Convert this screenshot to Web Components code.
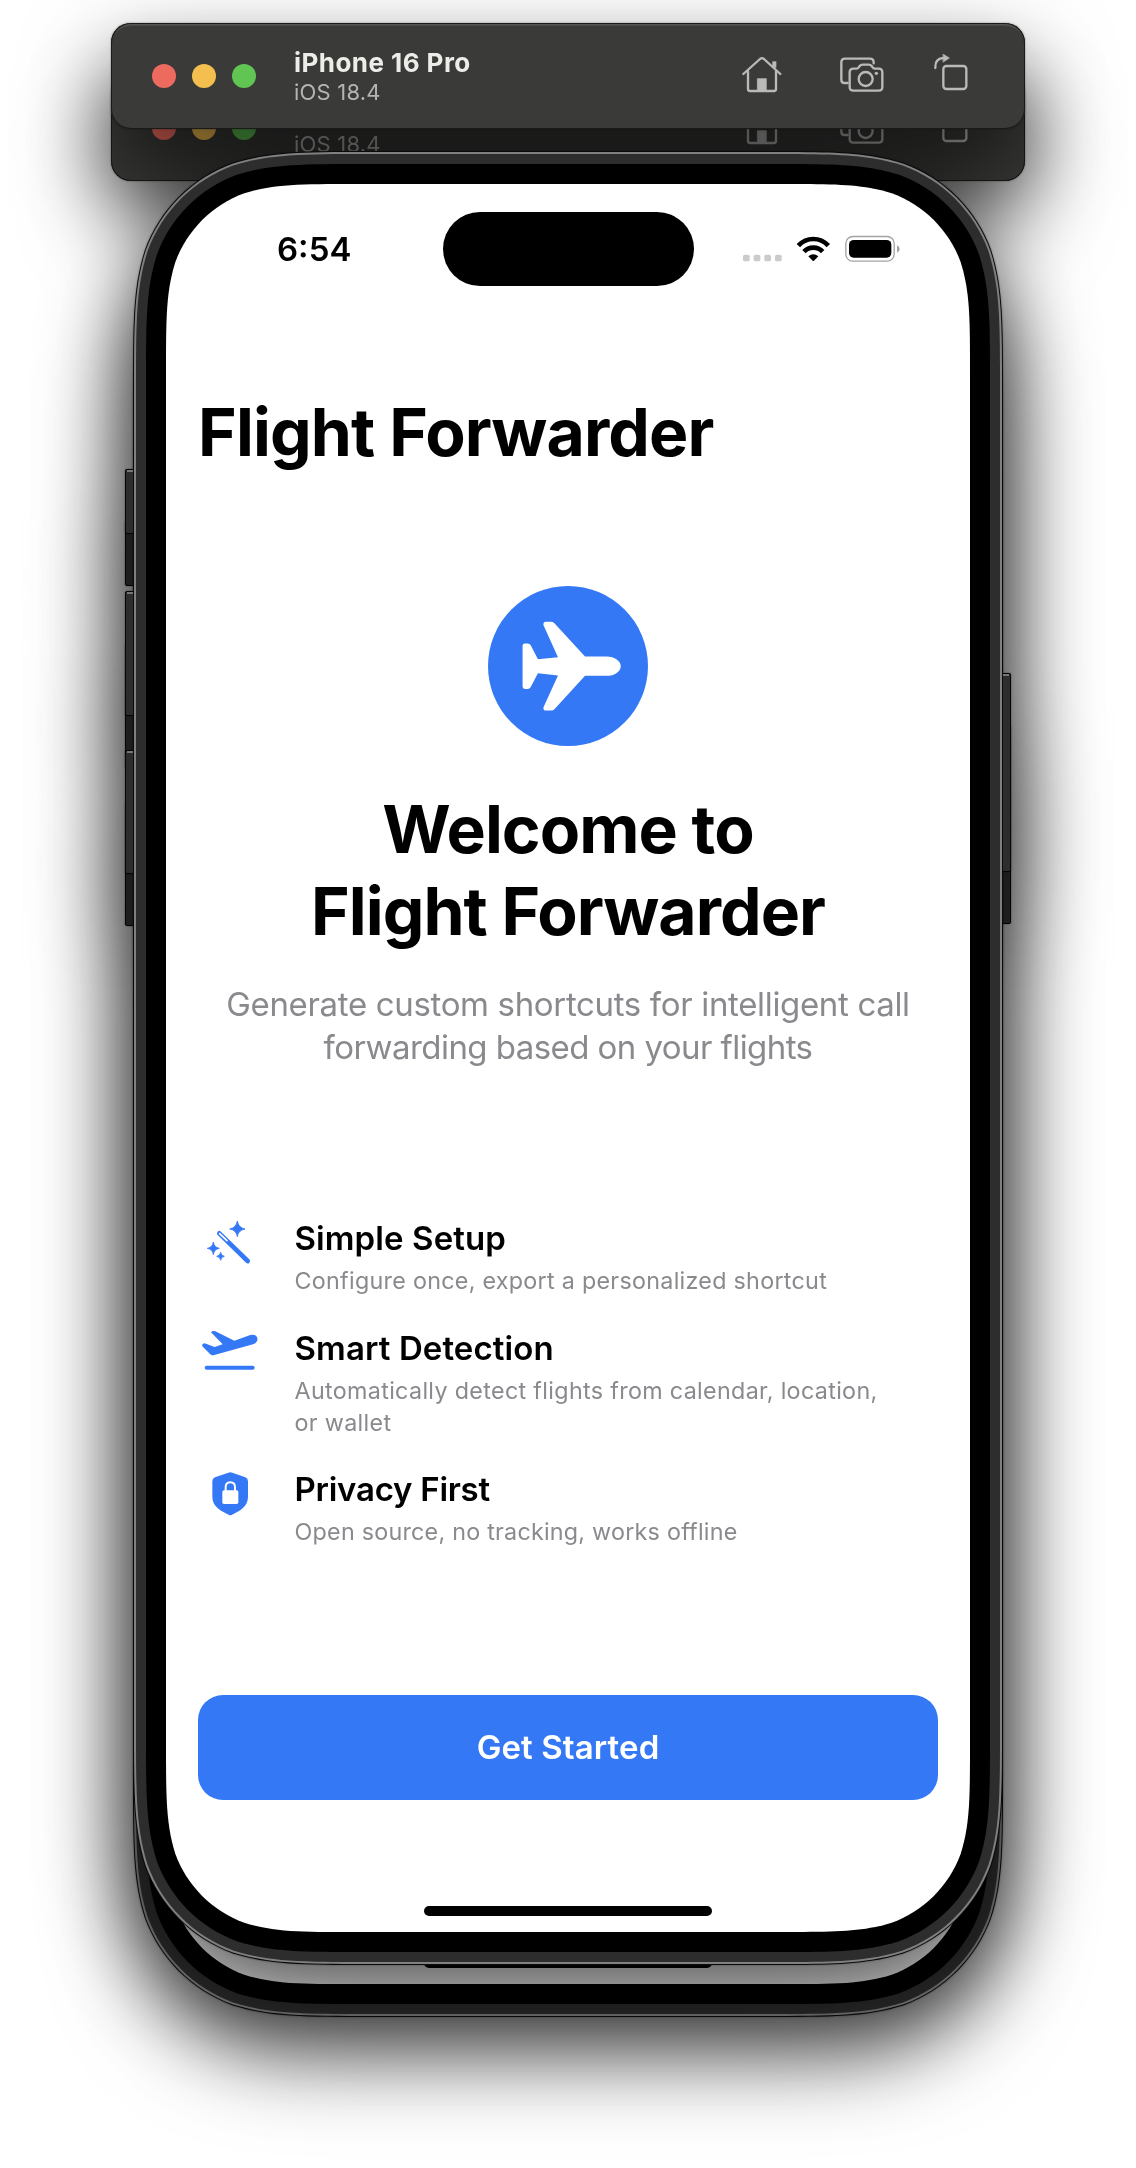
<!DOCTYPE html>
<html lang="en">
<head>
<meta charset="utf-8">
<title>iPhone 16 Pro</title>
<style>
  html, body { margin: 0; background: #fff; }
  body { width: 1136px; height: 2168px; overflow: hidden; font-family: Inter, "Liberation Sans", sans-serif; }
</style>
</head>
<body>
<sim-desktop>
  <sim-window class="back">
    <sim-toolbar slot="bar" subtitle="iOS 18.4"></sim-toolbar>
    <home-indicator></home-indicator>
  </sim-window>
  <sim-window class="front">
    <sim-toolbar slot="bar" heading="iPhone 16 Pro" subtitle="iOS 18.4"></sim-toolbar>
    <status-bar time="6:54"></status-bar>
    <welcome-page></welcome-page>
    <home-indicator></home-indicator>
  </sim-window>
</sim-desktop>

<script>
const define = (name, html) => customElements.define(name, class extends HTMLElement {
  constructor() {
    super();
    this.attachShadow({ mode: 'open' });
  }
  connectedCallback() {
    this.shadowRoot.innerHTML = typeof html === 'function' ? html(this) : html;
  }
});

/* Continuous-curvature rounded rectangle. */
function squircle(x, y, w, h, r) {
  const a = 1.528665 * r, b = 1.08849296 * r, c = 0.86840694 * r,
        d = 0.63149379 * r, e = 0.07491139 * r, f = 0.37282383 * r, g = 0.16905956 * r;
  const X = x + w, Y = y + h;
  return `M${x + a} ${y}H${X - a}` +
    `C${X - b} ${y} ${X - c} ${y} ${X - d} ${y + e}C${X - f} ${y + g} ${X - g} ${y + f} ${X - e} ${y + d}C${X} ${y + c} ${X} ${y + b} ${X} ${y + a}` +
    `V${Y - a}C${X} ${Y - b} ${X} ${Y - c} ${X - e} ${Y - d}C${X - g} ${Y - f} ${X - f} ${Y - g} ${X - d} ${Y - e}C${X - c} ${Y} ${X - b} ${Y} ${X - a} ${Y}` +
    `H${x + a}C${x + b} ${Y} ${x + c} ${Y} ${x + d} ${Y - e}C${x + f} ${Y - g} ${x + g} ${Y - f} ${x + e} ${Y - d}C${x} ${Y - c} ${x} ${Y - b} ${x} ${Y - a}` +
    `V${y + a}C${x} ${y + b} ${x} ${y + c} ${x + e} ${y + d}C${x + g} ${y + f} ${x + f} ${y + g} ${x + d} ${y + e}C${x + c} ${y} ${x + b} ${y} ${x + a} ${y}Z`;
}

define('sim-desktop', `
  <style>
    :host { display: grid; grid-template: 2168px / 1136px; justify-items: center; align-items: start; overflow: hidden; }
    ::slotted(*) { grid-area: 1 / 1; }
    ::slotted(.front) { margin-top: 23px; }
    ::slotted(.back) { margin-top: 75px; }
  </style><slot></slot>`);

define('sim-window', `
  <style>
    :host { display: flex; flex-direction: column; align-items: center; gap: 22px; width: 914px;
      filter: drop-shadow(0 0 1px rgba(0,0,0,.35)) drop-shadow(0 38px 43px rgba(0,0,0,.65)); }
    .device { display: grid; grid-template: 1815px / 896px; }
    .device > * { grid-area: 1 / 1; }
    svg { display: block; }
    .screen { margin: 33px 46px 34px; display: flex; flex-direction: column; }
  </style>
  <slot name="bar"></slot>
  <div class="device">
    <svg width="896" height="1815" viewBox="120 151 896 1815">
      ${[[469, 65], [591, 125], [750, 124]].map(([y, h]) => `
        <rect x="125" y="${y}" width="12" height="${h}" rx="2" fill="#050505"/>
        <rect x="126" y="${y + 1}" width="10" height="${h - 2}" rx="1.5" fill="#2d2d2d"/>
        <rect x="127" y="${y + 1}" width="9" height="2" fill="#767676"/>`).join('')}
      <rect x="999" y="673" width="12" height="199" rx="2" fill="#050505"/>
      <rect x="1000" y="674" width="10" height="197" rx="1.5" fill="#2d2d2d"/>
      <rect x="1000" y="674" width="9" height="2" fill="#767676"/>
      <path d="${squircle(133, 151, 870, 1814, 157)}" fill="#0a0a0a"/>
      <path d="${squircle(134, 152, 868, 1812, 156)}" fill="#808080"/>
      <path d="${squircle(136, 154, 864, 1808, 154)}" fill="#2d2d2d"/>
      <path d="${squircle(146, 164, 844, 1788, 144)}" fill="#000"/>
      <path d="${squircle(166, 184, 804, 1748, 124)}" fill="#fff"/>
    </svg>
    <div class="screen"><slot></slot></div>
  </div>`);

define('sim-toolbar', el => `
  <style>
    :host { display: flex; align-items: flex-start; box-sizing: border-box; width: 914px; height: 106px; padding: 0 0 0 41px;
      border-radius: 20px; background: #3a3a38; color: #ecece9;
      box-shadow: inset 0 0 0 1px #1a1a19, inset 0 2px 0 0 #555553, inset 0 3px 0 0 #4a4a48; }
    .lights { display: flex; gap: 16px; margin-top: 41px; }
    .lights i { width: 24px; height: 24px; border-radius: 50%; }
    .labels { display: flex; flex-direction: column; margin: 23.500px 0 0 38px; width: 442.700px; flex: none; }
    .t { font: 700 26px/32px Inter, "Liberation Sans", sans-serif; height: 32px; letter-spacing: .45px; white-space: nowrap; }
    .s { font: 400 22px/26px Inter, "Liberation Sans", sans-serif; color: #b4b4b2; letter-spacing: .2px; white-space: nowrap; }
    svg { display: block; margin-top: 29px; flex: none; }
  </style>
  <div class="lights"><i style="background:#ed6a5e"></i><i style="background:#f5bf4f"></i><i style="background:#61c554"></i></div>
  <div class="labels"><span class="t">${el.getAttribute('heading') || ''}</span><span class="s">${el.getAttribute('subtitle')}</span></div>
  <svg width="240" height="48" viewBox="290 156 720 144" fill="none" stroke="#bababa" stroke-width="7" stroke-linecap="round" stroke-linejoin="round">
    <path d="M309 222L359 177Q365 172 371 177L420 222"/>
    <path d="M323 214V267Q323 273 329 273H401Q407 273 407 267V214"/>
    <path d="M402 203V184" stroke-width="12" stroke-linecap="butt"/>
    <path d="M351 272V236H378V272Z" fill="#bababa" stroke-width="2"/>
    <path d="M622 249H613Q603 249 603 239V187Q603 176 614 176H689Q700 176 700 187V190"/>
    <path d="M639 206H648Q653 206 656 201L658 198Q661 194 667 194H685Q691 194 694 198L696 201Q699 206 704 206H715Q726 206 726 217V261Q726 272 715 272H639Q628 272 628 261V217Q628 206 639 206Z"/>
    <circle cx="676" cy="237" r="21"/>
    <circle cx="708" cy="220" r="5" fill="#bababa" stroke="none"/>
    <rect x="909" y="198" width="69" height="69" rx="9"/>
    <path d="M885 204V200Q885 175 910 174" />
    <path d="M909 163L927 174L909 186Z" fill="#bababa" stroke-width="2"/>
  </svg>`);

define('status-bar', el => `
  <style>
    :host { display: flex; align-items: center; box-sizing: border-box; height: 129px; padding-left: 111px; }
    .time { width: 166px; font: 600 33px/40px Inter, "Liberation Sans", sans-serif; padding-top: 1px; }
    svg { display: block; }
    .island { width: 251px; height: 74px; flex: none; }
    .right { margin-left: 46px; flex: none; }
  </style>
  <span class="time">${el.getAttribute('time')}</span>
  <svg class="island" viewBox="0 0 251 74"><rect width="251" height="74" rx="37"/></svg>
  <svg class="right" width="162" height="30" viewBox="299 702 486 90">
    <g fill="#cbcbcb"><rect x="308" y="764" width="20" height="20" rx="5"/><rect x="340" y="764" width="20" height="20" rx="5"/><rect x="372" y="764" width="20" height="20" rx="5"/><rect x="404" y="764" width="20" height="20" rx="5"/></g>
    <g fill="none" stroke="#000" stroke-width="14"><path d="M474 737Q493 717 519 717T564 737"/><path d="M491 755Q502 743 519 743T547 755"/></g>
    <path d="M504 769Q519 756 534 769L521 782Q519 784 517 782Z"/>
    <rect x="616.500" y="709.500" width="145" height="74" rx="21" fill="none" stroke="#a3a3a3" stroke-width="4"/>
    <rect x="626" y="720" width="127" height="53" rx="14"/>
    <path d="M770 736Q778 739 778 747T770 758Z" fill="#a3a3a3"/>
  </svg>`);

define('home-indicator', `
  <style>:host { display: block; width: 288px; height: 10px; border-radius: 5px; background: #000; margin: auto auto 16px; flex: none; }</style>`);

define('feature-row', el => `
  <style>
    :host { display: flex; gap: 32.500px; align-items: flex-start; }
    ::slotted(svg) { display: block; width: 64px; height: 48px; fill: #3478f6; flex: none; }
    .body { display: flex; flex-direction: column; gap: 7px; width: 600px; }
    .h { font: 600 33px/40px Inter, "Liberation Sans", sans-serif; letter-spacing: var(--hs, 0); white-space: nowrap; }
    .d { font: 400 23.300px/32px Inter, "Liberation Sans", sans-serif; color: #8a8a8e; letter-spacing: var(--ds, .3px); white-space: pre; }
  </style>
  <slot></slot>
  <div class="body"><span class="h">${el.getAttribute('heading')}</span><span class="d">${el.getAttribute('detail')}</span></div>`);

define('primary-button', `
  <style>
    :host { display: block; }
    button { display: block; width: 740px; height: 105px; border: 0; padding: 0; border-radius: 25px; background: #3478f6; color: #fff;
      font: 600 33px/105px Inter, "Liberation Sans", sans-serif; letter-spacing: .1px; }
  </style><button><slot></slot></button>`);

define('welcome-page', `
  <style>
    :host { display: flex; flex-direction: column; padding: 0 32px; }
    h1 { margin: 78px 0 0; font: 700 66px/82px Inter, "Liberation Sans", sans-serif; letter-spacing: -.85px; white-space: nowrap; }
    .logo { display: block; margin: 112.500px auto 0; }
    h2 { margin: 42px 0 0; font: 700 66px/82px Inter, "Liberation Sans", sans-serif; letter-spacing: -.95px; text-align: center; white-space: nowrap; }
    p { margin: 31px 0 0; font: 400 33px/43.500px Inter, "Liberation Sans", sans-serif; color: #8a8a8e; text-align: center; white-space: nowrap; }
    .l1 { letter-spacing: -.34px; }
    .l2 { letter-spacing: -.56px; }
    .features { display: flex; flex-direction: column; gap: 30.500px; margin: 148.500px 0 147px; }
  </style>
  <h1><span>Flight Forwarder</span></h1>
  <svg class="logo" width="160" height="160" viewBox="83.500 77 479 479">
    <circle cx="323" cy="316.500" r="239.500" fill="#3478f6"/>
    <path fill="#fff" d="M187 256Q187 249 194 249H203Q208 249 211 254L233 296L293 290L250 195Q247 184 257 184H273Q279 184 283 189L374 288H438C463 288 481 302 481 317S463 346 438 346H374L283 445Q279 450 273 450H257Q247 450 250 439L293 345L233 338L211 380Q208 385 203 385H194Q187 385 187 378Z"/>
  </svg>
  <h2><span>Welcome to</span><br><span>Flight Forwarder</span></h2>
  <p><span class="l1">Generate custom shortcuts for intelligent call</span><br><span class="l2">forwarding based on your flights</span></p>
  <div class="features">
    <feature-row heading="Simple Setup" detail="Configure once, export a personalized shortcut" style="--hs:.1px;--ds:.28px">
      <svg viewBox="54 53 192 144">
        <path d="M172 62Q175 82 195 86Q175 89 172 109Q169 89 149 86Q169 82 172 62ZM100 125Q102 141 118 144Q102 147 100 163Q98 147 82 144Q98 141 100 125ZM122 156Q123 166 133 168Q123 170 122 180Q121 170 110 168Q121 166 122 156Z" stroke="#3478f6" stroke-width="2.500" stroke-linejoin="round"/>
        <path d="M118 99L203 182" stroke="#3478f6" stroke-width="14" stroke-linecap="round"/>
        <path d="M119 100L141 121" stroke="#fff" stroke-width="5" stroke-linecap="round"/>
      </svg>
    </feature-row>
    <feature-row heading="Smart Detection" detail="Automatically detect flights from calendar, location,&#10;or wallet" style="--hs:.1px;--ds:.33px">
      <svg viewBox="54 382 192 144">
        <path d="M93 395L98 391Q102 390 106 392L163 420L211 403Q227 399 232 411Q235 424 219 431L103 463Q95 466 90 460L67 437Q65 433 69 429L74 428L104 439L128 431Z"/>
        <rect x="74" y="495" width="150" height="12" rx="6"/>
      </svg>
    </feature-row>
    <feature-row heading="Privacy First" detail="Open source, no tracking, works offline" style="--hs:-.25px;--ds:.24px">
      <svg viewBox="54 806 192 144">
        <path d="M145 817Q151 814 157 817L196 831Q204 834 204 843V890C204 921 175 934 156 943Q151 946 146 943C127 934 97 921 97 890V843Q97 834 105 831Z"/>
        <rect x="127" y="870" width="48" height="41" rx="5" fill="#fff"/>
        <path d="M137 873V861Q137 846 151 846T165 861V873" fill="none" stroke="#fff" stroke-width="6"/>
      </svg>
    </feature-row>
  </div>
  <primary-button>Get Started</primary-button>`);
</script>
</body>
</html>
